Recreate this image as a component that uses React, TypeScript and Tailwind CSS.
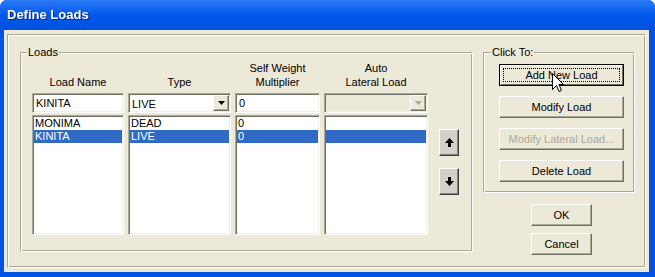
import React from 'react';

const raised =
  'bg-[#ece9d8] border border-t-white border-l-white border-r-[#716f64] border-b-[#716f64] shadow-[inset_-1px_-1px_0_#aca899]';
const sunken =
  'border border-t-[#aca899] border-l-[#aca899] border-r-white border-b-white shadow-[inset_1px_1px_0_#716f64,inset_-1px_-1px_0_#f1efe2]';
const etched =
  'border border-t-[#aca899] border-l-[#aca899] border-r-white border-b-white shadow-[inset_1px_1px_0_#fff,inset_-1px_-1px_0_#aca899]';

const rows = [
  { name: 'MONIMA', type: 'DEAD', sw: '0' },
  { name: 'KINITA', type: 'LIVE', sw: '0' },
];

function DropButton({ disabled }: { disabled?: boolean }) {
  return (
    <div className={`w-[16px] h-[16px] mr-[1px] flex items-center justify-center ${raised}`}>
      <svg width="7" height="4" viewBox="0 0 7 4">
        <path d="M0 0h7L3.5 4z" fill={disabled ? '#aca899' : '#000'} />
      </svg>
    </div>
  );
}

function ListBox({ w, field }: { w: string; field: 'name' | 'type' | 'sw' | null }) {
  return (
    <div className={`${w} h-[120px] bg-white ${sunken} pt-[1px] px-[1px]`}>
      {rows.map((r, i) => (
        <div
          key={i}
          className={`h-[13px] leading-[13px] pl-[1px] ${i === 1 ? 'bg-[#316ac5] text-white' : ''}`}
        >
          {field ? r[field] : ''}
        </div>
      ))}
    </div>
  );
}

function ArrowButton({ down }: { down?: boolean }) {
  return (
    <div
      className={`w-[20px] h-[27px] flex items-center justify-center bg-[#d4d0c8] border border-t-white border-l-white border-r-[#404040] border-b-[#404040] shadow-[inset_-1px_-1px_0_#808080]`}
    >
      <svg width="9" height="9" viewBox="0 0 9 9" className={down ? 'rotate-180' : ''}>
        <path d="M4.5 0L9 5H6v4H3V5H0z" fill="#000" />
      </svg>
    </div>
  );
}

function Button({ label, disabled, className = '' }: { label: string; disabled?: boolean; className?: string }) {
  return (
    <div
      className={`h-[22px] flex items-center justify-center ${raised} ${disabled ? 'text-[#aca899]' : ''} ${className}`}
    >
      {label}
    </div>
  );
}

export default function App() {
  return (
    <div className="w-[655px] h-[277px] bg-[#0054e3] rounded-t-[7px] flex flex-col overflow-hidden font-[family-name:'Liberation_Sans',Arial,sans-serif] text-[11px] text-black">
      {/* Title bar */}
      <div className="h-[30px] shrink-0 flex items-center pl-[7px] bg-gradient-to-b from-[#2a7af5] via-[#0058ec] to-[#0052de]">
        <span className="text-white font-bold text-[13px] drop-shadow-[1px_1px_0_#0a2a80]">Define Loads</span>
      </div>

      <div className="flex-1 flex pl-[4px] pr-[6px] pb-[5px]">
        <div className="flex-1 flex bg-[#ece9d8] pt-[4px] px-[3px] pb-[4px]">
          <div className={`flex-1 flex items-start ${etched}`}>
            {/* Loads group */}
            <fieldset className={`ml-[12px] mt-[11px] w-[453px] h-[206px] ${etched}`}>
              <legend className="ml-[6px] px-[1px] bg-[#ece9d8] leading-[13px]">Loads</legend>

              <div className="ml-[11px] mt-[2px]">
                {/* Headers */}
                <div className="flex gap-[4px] items-end h-[28px] leading-[14px] text-center">
                  <div className="w-[92px]">Load Name</div>
                  <div className="w-[103px]">Type</div>
                  <div className="w-[85px]">
                    <div>Self Weight</div>
                    <div>Multiplier</div>
                  </div>
                  <div className="w-[104px]">
                    <div>Auto</div>
                    <div>Lateral Load</div>
                  </div>
                </div>

                {/* Inputs */}
                <div className="flex gap-[4px] mt-[4px] h-[20px]">
                  <div className={`w-[92px] bg-white flex items-center pl-[3px] ${sunken}`}>KINITA</div>
                  <div className={`w-[103px] bg-white flex items-center pl-[3px] ${sunken}`}>
                    <span className="flex-1 pt-[2px]">LIVE</span>
                    <DropButton />
                  </div>
                  <div className={`w-[85px] bg-white flex items-center pl-[3px] ${sunken}`}>0</div>
                  <div className={`w-[104px] bg-[#ece9d8] flex items-center justify-end ${sunken}`}>
                    <DropButton disabled />
                  </div>
                </div>

                {/* Lists */}
                <div className="flex gap-[4px] mt-[2px] items-start">
                  <ListBox w="w-[92px]" field="name" />
                  <ListBox w="w-[103px]" field="type" />
                  <ListBox w="w-[85px]" field="sw" />
                  <ListBox w="w-[104px]" field={null} />
                  <div className="ml-[7px] mt-[14px] flex flex-col gap-[12px]">
                    <ArrowButton />
                    <ArrowButton down />
                  </div>
                </div>
              </div>
            </fieldset>

            {/* Right column */}
            <div className="ml-[10px] mt-[11px] w-[152px] flex flex-col">
              <fieldset className={`h-[147px] ${etched}`}>
                <legend className="ml-[7px] px-[1px] bg-[#ece9d8] leading-[13px]">Click To:</legend>
                <div className="ml-[15px] mt-[5px] w-[125px] flex flex-col gap-[10px]">
                  <div className="relative h-[22px] border border-black">
                    <div
                      className={`h-full flex items-center justify-center bg-[#ece9d8] border border-t-white border-l-white border-r-[#716f64] border-b-[#716f64] p-[2px]`}
                    >
                      <div className="w-full h-full flex items-center justify-center border border-dotted border-black">
                        Add New Load
                      </div>
                    </div>
                    <svg
                      className="absolute left-[52px] top-[8px]"
                      width="12"
                      height="20"
                      viewBox="0 0 12 20"
                    >
                      <path
                        d="M0.5 0.5V16.5L4.5 12.5L7 18.5L9.5 17.5L7 11.5H11.5Z"
                        fill="#fff"
                        stroke="#000"
                        strokeWidth="1"
                      />
                    </svg>
                  </div>
                  <Button label="Modify Load" />
                  <Button label="Modify Lateral Load..." disabled />
                  <Button label="Delete Load" />
                </div>
              </fieldset>

              <div className="ml-[48px] mt-[11px] w-[61px] flex flex-col gap-[7px]">
                <Button label="OK" />
                <Button label="Cancel" />
              </div>
            </div>
          </div>
        </div>
      </div>
    </div>
  );
}
